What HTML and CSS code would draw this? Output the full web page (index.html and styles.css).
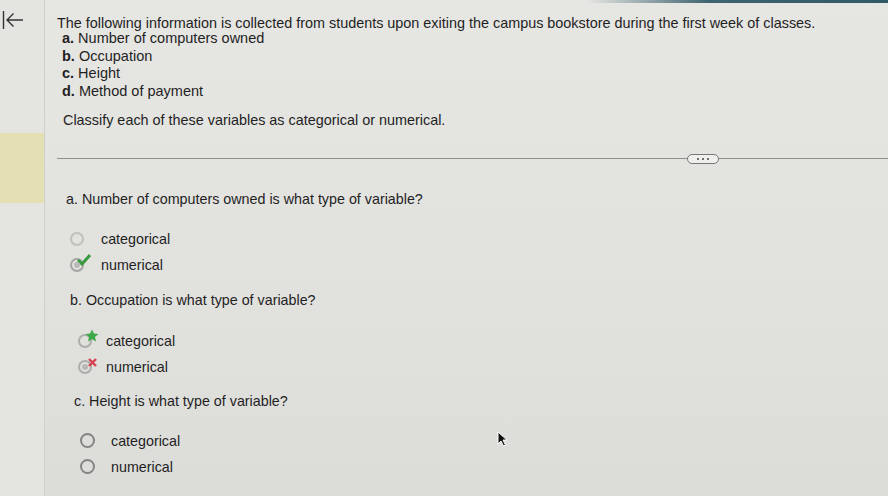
FILE: index.html
```html
<!DOCTYPE html>
<html>
<head>
<meta charset="utf-8">
<link rel="stylesheet" href="styles.css">
</head>
<body>
<div class="topbar"></div>
<div class="app">
  <aside class="side">
    <div class="back">
      <svg width="22" height="20" viewBox="0 0 22 20"><path d="M1.5 1v18M21 10H5M11.5 3.5L5 10l6.5 6.5" fill="none" stroke="#333" stroke-width="1.4"/></svg>
    </div>
    <div class="hl"></div>
  </aside>
  <main class="main">
    <p class="intro">The following information is collected from students upon exiting the campus bookstore during the first week of classes.</p>
    <ul class="vars">
      <li><b>a.</b> Number of computers owned</li>
      <li><b>b.</b> Occupation</li>
      <li><b>c.</b> Height</li>
      <li><b>d.</b> Method of payment</li>
    </ul>
    <p class="classify">Classify each of these variables as categorical or numerical.</p>
    <div class="divider"><span class="pill"><i></i><i></i><i></i></span></div>
    <section class="q q1">
      <p class="qt">a. Number of computers owned is what type of variable?</p>
      <div class="opt"><span class="radio"></span>categorical</div>
      <div class="opt"><span class="radio sel"><svg class="mark" width="14" height="12" viewBox="0 0 14 12"><path d="M1 6l4 4 8-9" fill="none" stroke="#3a9a3e" stroke-width="3"/></svg></span>numerical</div>
    </section>
    <section class="q q2">
      <p class="qt">b. Occupation is what type of variable?</p>
      <div class="opt"><span class="radio"><svg class="mark star" width="14" height="14" viewBox="0 0 14 14"><path d="M7 0.5l1.9 4.1 4.5.5-3.4 3 1 4.4L7 10.2 3 12.5l1-4.4-3.4-3 4.5-.5z" fill="#3fa847"/></svg></span>categorical</div>
      <div class="opt"><span class="radio sel"><svg class="mark x" width="11" height="11" viewBox="0 0 11 11"><path d="M2 2l7 7M9 2l-7 7" stroke="#d84050" stroke-width="2.4"/></svg></span>numerical</div>
    </section>
    <section class="q q3">
      <p class="qt">c. Height is what type of variable?</p>
      <div class="opt"><span class="radio"></span>categorical</div>
      <div class="opt"><span class="radio"></span>numerical</div>
    </section>
  </main>
</div>
<svg class="cursor" width="12" height="16" viewBox="0 0 12 16"><path d="M1 1v12l3-3 2.5 5 2-1-2.5-5h4z" fill="#111" stroke="#fff" stroke-width="1"/></svg>
</body>
</html>
```
FILE: styles.css
```css
html, body {
  margin: 0;
  padding: 0;
}
body {
  width: 888px;
  height: 496px;
  overflow: hidden;
  background: linear-gradient(180deg, #e6e6e3 0%, #e1e1de 60%, #dcdcd9 100%);
  font-family: "Liberation Sans", Arial, sans-serif;
  color: #1f1f1f;
  position: relative;
}
.topbar {
  position: absolute;
  top: 0;
  right: 0;
  width: 300px;
  height: 3px;
  background: linear-gradient(90deg, rgba(60,100,110,0) 0%, #3e6470 40%, #2f5a66 100%);
}
.app {
  display: flex;
  height: 496px;
}
.side {
  width: 44px;
  flex: none;
  border-right: 1px solid #cfcfcb;
  background: #e4e4e1;
}
.back {
  padding: 10px 0 0 2px;
  height: 133px;
  box-sizing: border-box;
}
.hl {
  height: 70px;
  background: #e5e0b4;
}
.main {
  flex: 1;
  padding-left: 12px;
}
.intro {
  margin: 14px 0 0 0;
  font-size: 14.4px;
  line-height: 18px;
}
.vars {
  list-style: none;
  margin: -2px 0 0 5px;
  padding: 0;
  font-size: 14.5px;
  line-height: 17.7px;
}
.vars b { font-weight: bold; }
.classify {
  margin: 10px 0 0 6px;
  font-size: 14.4px;
  line-height: 18px;
}
.divider {
  margin-top: 29px;
  height: 1px;
  background: #8e8e8c;
  position: relative;
}
.pill {
  position: absolute;
  left: 630px;
  top: -4px;
  width: 30px;
  height: 8px;
  border: 1px solid #777;
  border-radius: 5px;
  background: #efefed;
  display: flex;
  justify-content: center;
  align-items: center;
  gap: 3px;
}
.pill i {
  width: 2px;
  height: 2px;
  background: #444;
  border-radius: 50%;
}
.q {
  font-size: 14.3px;
}
.qt {
  margin: 0;
  line-height: 18px;
}
.q1 { margin: 31px 0 0 9px; }
.q2 { margin: 13px 0 0 13px; }
.q3 { margin: 12px 0 0 17px; }
.opt {
  display: flex;
  align-items: center;
  height: 26px;
  line-height: 18px;
}
.q .qt + .opt { margin-top: 18px; }
.q2 .qt + .opt { margin-top: 19px; }
.q1 .opt { padding-left: 4px; gap: 17px; }
.q2 .opt { padding-left: 8px; gap: 14px; }
.q3 .opt { padding-left: 6px; gap: 16px; }
.radio {
  width: 10px;
  height: 10px;
  border: 2px solid #8d8d8d;
  border-radius: 50%;
  flex: none;
  position: relative;
}
.q3 .radio {
  width: 11px;
  height: 11px;
  border-width: 2.2px;
  border-color: #858585;
}
.q1 .radio:not(.sel) { border-color: #c0c0bd; }
.radio.sel { border-color: #a5a5a3; }
.radio.sel::after {
  content: "";
  position: absolute;
  left: 2px;
  top: 2px;
  width: 6px;
  height: 6px;
  border-radius: 50%;
  background: #b8b8b6;
}
.q2 .radio { border-color: #adadab; }
.mark {
  position: absolute;
  left: 5px;
  top: -6px;
}
.mark.star { left: 5px; top: -7px; }
.mark.x { left: 7px; top: -5px; }
.cursor {
  position: absolute;
  left: 497px;
  top: 431px;
}
```
